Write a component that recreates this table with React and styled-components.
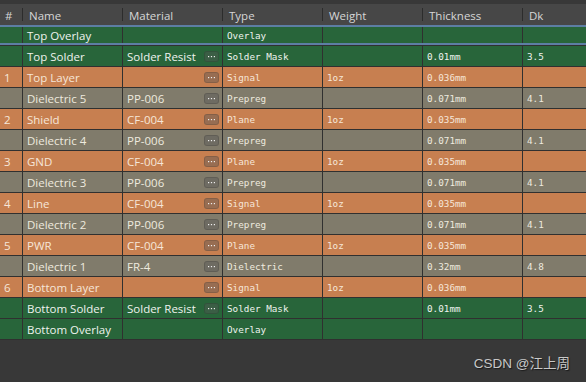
import React from "react";
import styled, { createGlobalStyle } from "styled-components";

const Global = createGlobalStyle`
  html, body { margin: 0; padding: 0; background: #383838; }
  body { font-family: "Open Sans", "Noto Sans", sans-serif; }
`;

const Page = styled.div`
  position: relative;
  width: 586px;
  height: 382px;
  background: #383838;
  padding-top: 4px;
  box-sizing: border-box;
  overflow: hidden;
`;

const Table = styled.div`
  display: flex;
  flex-direction: column;
  background: #303030;
`;

const cols = `22px repeat(5, 99px) 1fr`;

const Header = styled.div`
  display: grid;
  grid-template-columns: ${cols};
  column-gap: 1px;
  height: 21px;
  background: #474747;
  border-bottom: 2px solid #5d7ea4;
`;

const HeadCell = styled.div`
  display: flex;
  align-items: center;
  padding-left: ${(p) => (p.$first ? "5px" : "6px")};
  padding-top: 2px;
  font-size: 11.5px;
  color: #d6d6d6;
  border-left: ${(p) => (p.$first ? "none" : "1px solid #2c2c2c")};
  margin-left: ${(p) => (p.$first ? "0" : "-1px")};
  height: 11px;
  align-self: center;
  line-height: 11px;
`;

const palette = {
  green: { bg: "#28653a", fg: "#eef3ee" },
  orange: { bg: "#c77f50", fg: "#f6e6d8" },
  gray: { bg: "#807b6b", fg: "#eeeadf" },
};

const Row = styled.div`
  display: grid;
  grid-template-columns: ${cols};
  column-gap: 1px;
  height: ${(p) => (p.$sel ? "16px" : "20px")};
  border-bottom: ${(p) => (p.$sel ? "2px solid #5d7ea4" : "1px solid #303030")};
  margin-bottom: ${(p) => (p.$sel ? "1px" : "0")};
  background: #303030;
`;

const Cell = styled.div`
  display: flex;
  align-items: center;
  justify-content: space-between;
  background: ${(p) => palette[p.$tone].bg};
  color: ${(p) => palette[p.$tone].fg};
  padding-left: 4px;
  padding-right: 3px;
  font-family: ${(p) =>
    p.$mono ? '"DejaVu Sans Mono", "Liberation Mono", monospace' : '"Open Sans", "Noto Sans", sans-serif'};
  font-size: ${(p) => (p.$mono ? "9.3px" : "11.5px")};
  white-space: nowrap;
  overflow: hidden;
`;

const DotsButton = styled.span`
  display: inline-flex;
  align-items: center;
  justify-content: center;
  width: 15px;
  height: 11px;
  border-radius: 3px;
  background: rgba(85, 85, 85, 0.42);
  border: 1px solid rgba(0, 0, 0, 0.12);
  box-sizing: border-box;
`;

const Watermark = styled.div`
  position: absolute;
  right: 16px;
  bottom: 10px;
  font-family: "Liberation Sans", "Noto Sans CJK SC", sans-serif;
  font-size: 13.5px;
  color: #c8c8c8;
  text-shadow: 1px 1px 1px #1a1a1a;
`;

function Dots() {
  return (
    <DotsButton>
      <svg width="7" height="3" viewBox="0 0 7 3">
        <rect x="0" y="1" width="1.2" height="1.2" fill="#eeeeee" />
        <rect x="2.9" y="1" width="1.2" height="1.2" fill="#eeeeee" />
        <rect x="5.8" y="1" width="1.2" height="1.2" fill="#eeeeee" />
      </svg>
    </DotsButton>
  );
}

const rows = [
  { tone: "green", num: "", name: "Top Overlay", mat: "", btn: false, type: "Overlay", w: "", th: "", dk: "", sel: true },
  { tone: "green", num: "", name: "Top Solder", mat: "Solder Resist", btn: true, type: "Solder Mask", w: "", th: "0.01mm", dk: "3.5" },
  { tone: "orange", num: "1", name: "Top Layer", mat: "", btn: true, type: "Signal", w: "1oz", th: "0.036mm", dk: "" },
  { tone: "gray", num: "", name: "Dielectric 5", mat: "PP-006", btn: true, type: "Prepreg", w: "", th: "0.071mm", dk: "4.1" },
  { tone: "orange", num: "2", name: "Shield", mat: "CF-004", btn: true, type: "Plane", w: "1oz", th: "0.035mm", dk: "" },
  { tone: "gray", num: "", name: "Dielectric 4", mat: "PP-006", btn: true, type: "Prepreg", w: "", th: "0.071mm", dk: "4.1" },
  { tone: "orange", num: "3", name: "GND", mat: "CF-004", btn: true, type: "Plane", w: "1oz", th: "0.035mm", dk: "" },
  { tone: "gray", num: "", name: "Dielectric 3", mat: "PP-006", btn: true, type: "Prepreg", w: "", th: "0.071mm", dk: "4.1" },
  { tone: "orange", num: "4", name: "Line", mat: "CF-004", btn: true, type: "Signal", w: "1oz", th: "0.035mm", dk: "" },
  { tone: "gray", num: "", name: "Dielectric 2", mat: "PP-006", btn: true, type: "Prepreg", w: "", th: "0.071mm", dk: "4.1" },
  { tone: "orange", num: "5", name: "PWR", mat: "CF-004", btn: true, type: "Plane", w: "1oz", th: "0.035mm", dk: "" },
  { tone: "gray", num: "", name: "Dielectric 1", mat: "FR-4", btn: true, type: "Dielectric", w: "", th: "0.32mm", dk: "4.8" },
  { tone: "orange", num: "6", name: "Bottom Layer", mat: "", btn: true, type: "Signal", w: "1oz", th: "0.036mm", dk: "" },
  { tone: "green", num: "", name: "Bottom Solder", mat: "Solder Resist", btn: true, type: "Solder Mask", w: "", th: "0.01mm", dk: "3.5" },
  { tone: "green", num: "", name: "Bottom Overlay", mat: "", btn: false, type: "Overlay", w: "", th: "", dk: "" },
];

const headers = ["#", "Name", "Material", "Type", "Weight", "Thickness", "Dk"];

export default function App() {
  return (
    <Page>
      <Global />
      <Table>
        <Header>
          {headers.map((h, i) => (
            <HeadCell key={h} $first={i === 0}>
              {h}
            </HeadCell>
          ))}
        </Header>
        {rows.map((r) => (
          <Row key={r.name} $sel={r.sel}>
            <Cell $tone={r.tone}>{r.num}</Cell>
            <Cell $tone={r.tone}>{r.name}</Cell>
            <Cell $tone={r.tone}>
              <span>{r.mat}</span>
              {r.btn && <Dots />}
            </Cell>
            <Cell $tone={r.tone} $mono>{r.type}</Cell>
            <Cell $tone={r.tone} $mono>{r.w}</Cell>
            <Cell $tone={r.tone} $mono>{r.th}</Cell>
            <Cell $tone={r.tone} $mono>{r.dk}</Cell>
          </Row>
        ))}
      </Table>
      <Watermark>CSDN @江上周</Watermark>
    </Page>
  );
}
